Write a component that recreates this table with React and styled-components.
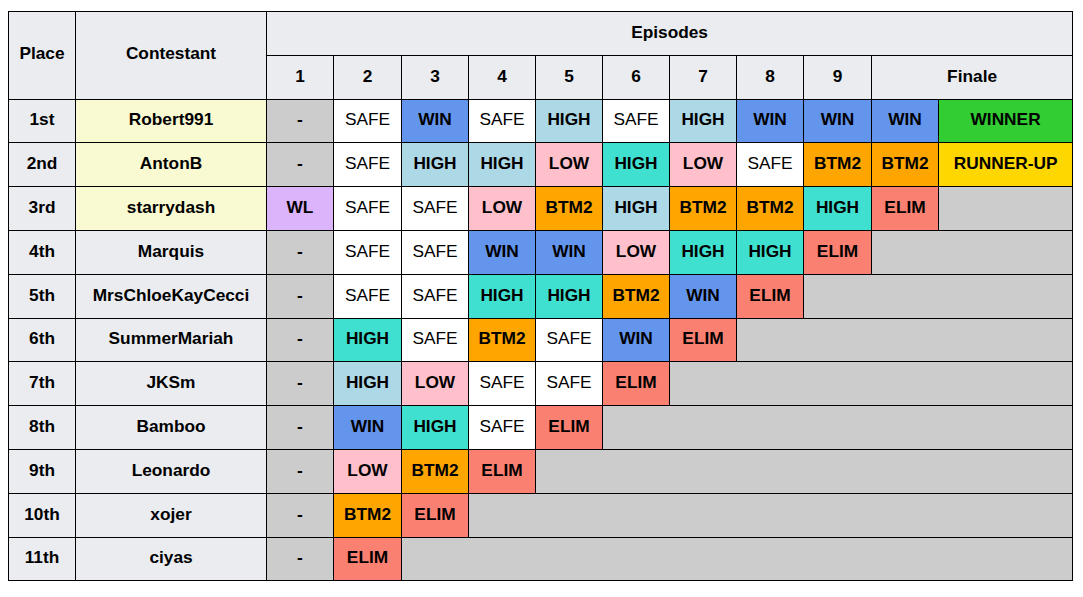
import React from 'react';
import styled, { createGlobalStyle } from 'styled-components';

const GlobalStyle = createGlobalStyle`
  html, body {
    margin: 0;
    background: #ffffff;
  }
  body {
    padding: 11px 8px;
    font-family: "Liberation Sans", Arial, sans-serif;
  }
`;

const tones = {
  header: '#eaecf0',
  gold: '#fafad2',
  none: '#cccccc',
  safe: '#ffffff',
  win: '#6495ed',
  high: '#add8e6',
  top: '#40e0d0',
  low: '#ffc0cb',
  btm: '#ffa500',
  elim: '#fa8072',
  wl: '#dcb4fc',
  winner: '#32cd32',
  runner: '#ffd700',
};

const Table = styled.table`
  border-collapse: collapse;
  table-layout: fixed;
  width: 1064px;
  color: #000;
  font-size: 17.3px;
  border: 1px solid #000;
  tr {
    height: 43.8px;
  }
`;

const HeadCell = styled.th`
  background: ${tones.header};
  border: 1px solid #000;
  font-weight: bold;
  text-align: center;
  vertical-align: middle;
  padding: 0 0 ${(p) => (p.rowSpan > 1 ? 4 : 2)}px;
`;

const PlaceCell = styled.td`
  background: ${tones.header};
  border: 1px solid #000;
  font-weight: bold;
  text-align: center;
  padding: 0 0 2px;
`;

const NameCell = styled.td`
  background: ${(p) => (p.$finalist ? tones.gold : tones.header)};
  border: 1px solid #000;
  font-weight: bold;
  text-align: center;
  padding: 0 0 2px;
`;

const ResultCell = styled.td`
  background: ${(p) => tones[p.$tone]};
  border: 1px solid #000;
  font-weight: ${(p) => (p.$tone === 'safe' ? 'normal' : 'bold')};
  text-align: center;
  white-space: nowrap;
  padding: 0 0 2px;
`;

const styleOf = {
  '-': 'none',
  SAFE: 'safe',
  WIN: 'win',
  HIGH: 'high',
  TOP: 'top',
  LOW: 'low',
  BTM2: 'btm',
  ELIM: 'elim',
  WL: 'wl',
  WINNER: 'winner',
  'RUNNER-UP': 'runner',
};

// TOP = the turquoise "HIGH"
const rows = [
  ['1st', 'Robert991', ['-', 'SAFE', 'WIN', 'SAFE', 'HIGH', 'SAFE', 'HIGH', 'WIN', 'WIN', 'WIN', 'WINNER']],
  ['2nd', 'AntonB', ['-', 'SAFE', 'HIGH', 'HIGH', 'LOW', 'TOP', 'LOW', 'SAFE', 'BTM2', 'BTM2', 'RUNNER-UP']],
  ['3rd', 'starrydash', ['WL', 'SAFE', 'SAFE', 'LOW', 'BTM2', 'HIGH', 'BTM2', 'BTM2', 'TOP', 'ELIM']],
  ['4th', 'Marquis', ['-', 'SAFE', 'SAFE', 'WIN', 'WIN', 'LOW', 'TOP', 'TOP', 'ELIM']],
  ['5th', 'MrsChloeKayCecci', ['-', 'SAFE', 'SAFE', 'TOP', 'TOP', 'BTM2', 'WIN', 'ELIM']],
  ['6th', 'SummerMariah', ['-', 'TOP', 'SAFE', 'BTM2', 'SAFE', 'WIN', 'ELIM']],
  ['7th', 'JKSm', ['-', 'HIGH', 'LOW', 'SAFE', 'SAFE', 'ELIM']],
  ['8th', 'Bamboo', ['-', 'WIN', 'TOP', 'SAFE', 'ELIM']],
  ['9th', 'Leonardo', ['-', 'LOW', 'BTM2', 'ELIM']],
  ['10th', 'xojer', ['-', 'BTM2', 'ELIM']],
  ['11th', 'ciyas', ['-', 'ELIM']],
];

const colWidths = [67, 191, 67, 68, 67, 67, 67, 67, 67, 67, 68, 67, 134];
const TOTAL = 11;

export default function App() {
  return (
    <>
      <GlobalStyle />
      <Table>
        <colgroup>
          {colWidths.map((w, i) => (
            <col key={i} style={{ width: w }} />
          ))}
        </colgroup>
        <thead>
          <tr>
            <HeadCell rowSpan={2}>Place</HeadCell>
            <HeadCell rowSpan={2}>Contestant</HeadCell>
            <HeadCell colSpan={11}>Episodes</HeadCell>
          </tr>
          <tr>
            {[1, 2, 3, 4, 5, 6, 7, 8, 9].map((n) => (
              <HeadCell key={n}>{n}</HeadCell>
            ))}
            <HeadCell colSpan={2}>Finale</HeadCell>
          </tr>
        </thead>
        <tbody>
          {rows.map(([place, name, results], r) => (
            <tr key={name}>
              <PlaceCell>{place}</PlaceCell>
              <NameCell $finalist={r < 3}>{name}</NameCell>
              {results.map((res, i) => (
                <ResultCell key={i} $tone={styleOf[res]}>
                  {res === 'TOP' ? 'HIGH' : res}
                </ResultCell>
              ))}
              {results.length < TOTAL && (
                <ResultCell $tone="none" colSpan={TOTAL - results.length} />
              )}
            </tr>
          ))}
        </tbody>
      </Table>
    </>
  );
}
